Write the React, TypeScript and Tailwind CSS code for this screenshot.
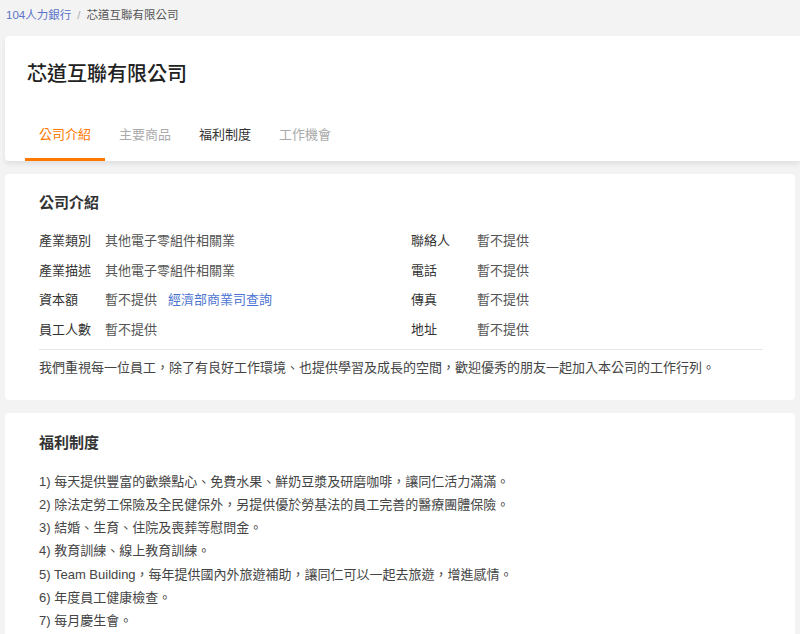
import React from 'react';

const font = { fontFamily: '"Liberation Sans", "Noto Sans CJK TC", sans-serif' };

const leftRows = [
    { label: '產業類別', value: '其他電子零組件相關業' },
    { label: '產業描述', value: '其他電子零組件相關業' },
    { label: '資本額', value: '暫不提供', link: '經濟部商業司查詢' },
    { label: '員工人數', value: '暫不提供' },
];

const rightRows = [
    { label: '聯絡人', value: '暫不提供' },
    { label: '電話', value: '暫不提供' },
    { label: '傳真', value: '暫不提供' },
    { label: '地址', value: '暫不提供' },
];

const benefits = [
    '1) 每天提供豐富的歡樂點心、免費水果、鮮奶豆漿及研磨咖啡，讓同仁活力滿滿。',
    '2) 除法定勞工保險及全民健保外，另提供優於勞基法的員工完善的醫療團體保險。',
    '3) 結婚、生育、住院及喪葬等慰問金。',
    '4) 教育訓練、線上教育訓練。',
    '5) Team Building，每年提供國內外旅遊補助，讓同仁可以一起去旅遊，增進感情。',
    '6) 年度員工健康檢查。',
    '7) 每月慶生會。',
];

const tabs = [
    { name: '公司介紹', active: true },
    { name: '主要商品', muted: true },
    { name: '福利制度' },
    { name: '工作機會', muted: true },
];

export default function App() {
    return (
        <div className="min-h-screen bg-[#f3f3f3] pb-10" style={font}>
            {/* Breadcrumb */}
            <div className="h-[36px] pl-[6px] pt-[7px] text-[11.5px] leading-[16px] flex gap-[6px]">
                <span className="text-[#5a72c8]">104人力銀行</span>
                <span className="text-[#aaa]">/</span>
                <span className="text-[#555]">芯道互聯有限公司</span>
            </div>

            {/* Header */}
            <div className="ml-[5px] bg-white rounded-l-[4px] shadow-[0_3px_5px_rgba(0,0,0,0.08)] pt-[24px]">
                <h1 className="ml-[22px] text-[20px] leading-[28px] text-[#222] font-medium">芯道互聯有限公司</h1>
                <div className="ml-[20px] mt-[37px] flex">
                    {tabs.map((t) => (
                        <div
                            key={t.name}
                            className={
                                t.active
                                    ? 'px-[14px] pb-[13px] text-[13px] leading-[20px] border-b-[3px] border-[#ff7800] text-[#ff7800]'
                                    : t.muted
                                        ? 'px-[14px] pb-[13px] text-[13px] leading-[20px] border-b-[3px] border-transparent text-[#aaa]'
                                        : 'px-[14px] pb-[13px] text-[13px] leading-[20px] border-b-[3px] border-transparent text-[#333]'
                            }
                        >
                            {t.name}
                        </div>
                    ))}
                </div>
            </div>

            {/* Company intro */}
            <section className="mx-[5px] mt-[13px] bg-white rounded-[4px] pl-[34px] pr-[32px] pt-[18px] pb-[22px]">
                <h2 className="text-[15px] leading-[22px] font-bold text-[#333]">公司介紹</h2>
                <div className="mt-[12px] grid grid-cols-[372px_1fr] text-[13px] leading-[29.7px]">
                    <div>
                        {leftRows.map((r) => (
                            <div key={r.label} className="flex">
                                <span className="w-[66px] text-[#333]">{r.label}</span>
                                <span className="text-[#555]">{r.value}</span>
                                {r.link && <span className="ml-[11px] text-[#4b73d0]">{r.link}</span>}
                            </div>
                        ))}
                    </div>
                    <div>
                        {rightRows.map((r) => (
                            <div key={r.label} className="flex">
                                <span className="w-[66px] text-[#333]">{r.label}</span>
                                <span className="text-[#555]">{r.value}</span>
                            </div>
                        ))}
                    </div>
                </div>
                <div className="mt-[4px] h-px bg-[#e6e6e6]"></div>
                <p className="mt-[8px] text-[13px] leading-[20px] text-[#444]">
                    我們重視每一位員工，除了有良好工作環境、也提供學習及成長的空間，歡迎優秀的朋友一起加入本公司的工作行列。
                </p>
            </section>

            {/* Benefits */}
            <section className="mx-[5px] mt-[13px] bg-white rounded-[4px] pl-[34px] pr-[32px] pt-[19px] pb-[20px]">
                <h2 className="text-[15px] leading-[22px] font-bold text-[#333]">福利制度</h2>
                <ul className="mt-[16px] text-[13px] leading-[23.2px] text-[#444]">
                    {benefits.map((b) => (
                        <li key={b}>{b}</li>
                    ))}
                </ul>
            </section>
        </div>
    );
}
